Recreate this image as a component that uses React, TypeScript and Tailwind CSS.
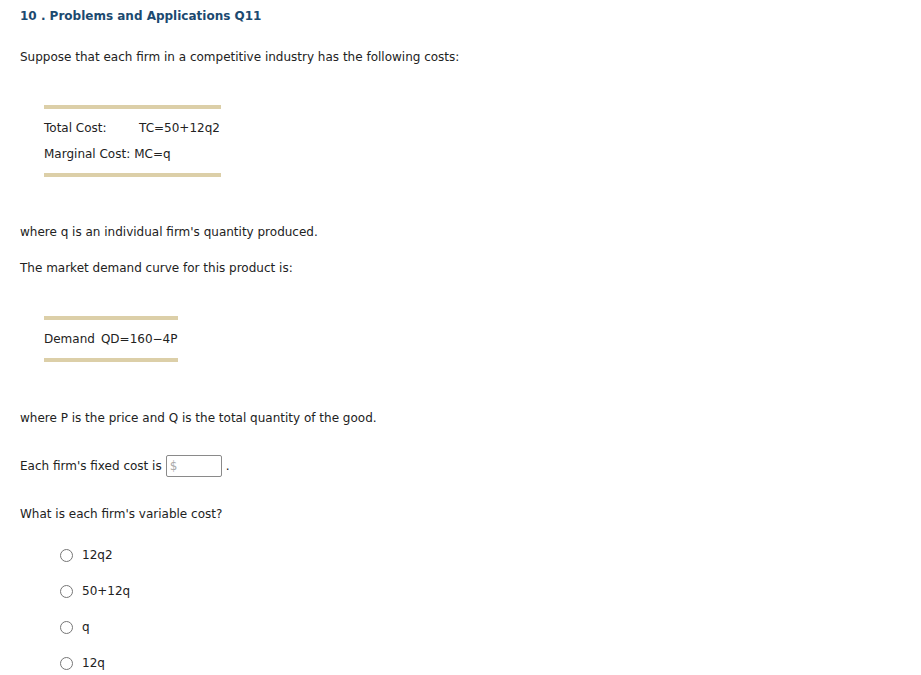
const Bar = () => <div className="h-1 bg-[#dccfa8]" />;

function Radio({ label }: { label: string }) {
  return (
    <label className="flex items-center h-9">
      <span className="w-[13px] h-[13px] rounded-full border border-[#767676] bg-white" />
      <span className="ml-[9px]">{label}</span>
    </label>
  );
}

export default function App() {
  return (
    <div className="bg-white min-h-screen px-5 text-[12px] text-[#222] font-['DejaVu_Sans',Verdana,sans-serif]">
      <h1 className="pt-[8px] text-[12px] font-bold text-[#1c4a70] leading-4">10 . Problems and Applications Q11</h1>

      <p className="mt-[25px] leading-4">Suppose that each firm in a competitive industry has the following costs:</p>

      <div className="mt-[40px] ml-6 w-[177px]">
        <Bar />
        <div className="py-[6px]">
          <div className="flex h-[26px] items-center whitespace-nowrap">
            <span className="w-[95px]">Total Cost:</span>
            <span>TC=50+12q2</span>
          </div>
          <div className="flex h-[26px] items-center whitespace-nowrap">
            <span className="mr-[4px]">Marginal Cost:</span>
            <span>MC=q</span>
          </div>
        </div>
        <Bar />
      </div>

      <p className="mt-[47px] leading-4">where q is an individual firm's quantity produced.</p>
      <p className="mt-[20px] leading-4">The market demand curve for this product is:</p>

      <div className="mt-[40px] ml-6 w-[134px]">
        <Bar />
        <div className="flex h-[38px] items-center whitespace-nowrap">
          <span className="mr-[6px]">Demand</span>
          <span>QD=160−4P</span>
        </div>
        <Bar />
      </div>

      <p className="mt-[48px] leading-4">where P is the price and Q is the total quantity of the good.</p>

      <div className="mt-[29px] flex items-center h-[22px]">
        <span>Each firm's fixed cost is</span>
        <span className="ml-[4px] w-[56px] h-[22px] border border-[#8a8a8a] rounded-[2px] flex items-center pl-[3px] text-[#aaa]">$</span>
        <span className="ml-[4px]">.</span>
      </div>

      <p className="mt-[29px] leading-4">What is each firm's variable cost?</p>

      <div className="mt-[15px] ml-10">
        <Radio label="12q2" />
        <Radio label="50+12q" />
        <Radio label="q" />
        <Radio label="12q" />
      </div>
    </div>
  );
}
